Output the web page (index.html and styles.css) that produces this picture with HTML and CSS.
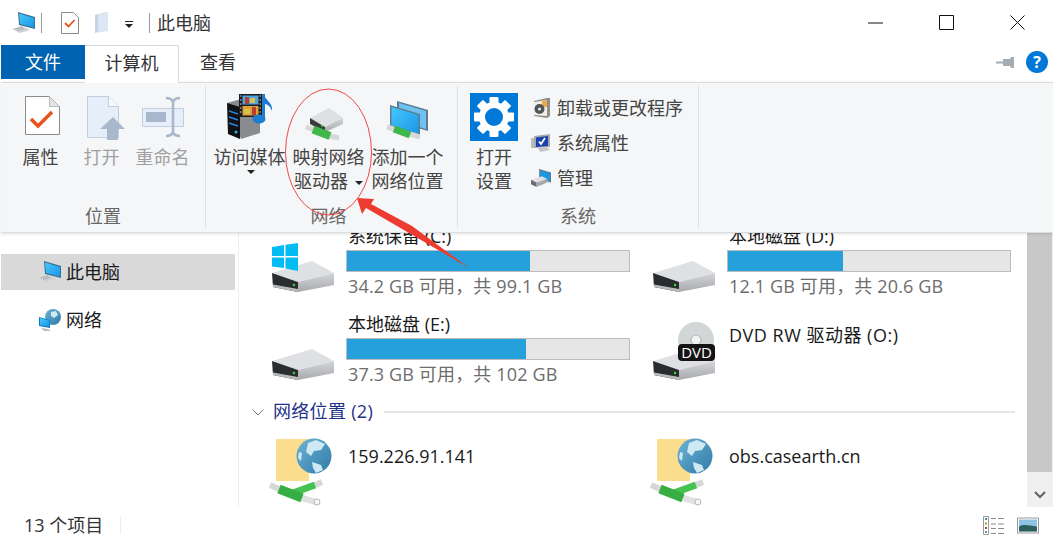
FILE: index.html
```html
<!DOCTYPE html>
<html lang="zh-CN">
<head>
    <meta charset="UTF-8">
    <title>此电脑</title>
    <link rel="stylesheet" href="styles.css">
</head>
<body>
    <svg class="defs" aria-hidden="true">
        <defs>
            <linearGradient id="screen" x1="0" y1="0" x2="1" y2="1">
                <stop offset="0" stop-color="#45c8fb"/>
                <stop offset="1" stop-color="#1a96e6"/>
            </linearGradient>
            <linearGradient id="side" x1="0" y1="0" x2="0" y2="1">
                <stop offset="0" stop-color="#d4d5d8"/>
                <stop offset="1" stop-color="#a9aaad"/>
            </linearGradient>
            <linearGradient id="globe" x1="0" y1="0" x2="1" y2="1">
                <stop offset="0" stop-color="#6db3d4"/>
                <stop offset="1" stop-color="#2f7aa8"/>
            </linearGradient>
            <symbol id="pc" viewBox="0 0 24 22">
                <path d="M6 0l17 5v12L7 13z" fill="#3a6f96"/>
                <path d="M7 1.500l15 4.400v9.500L8 12z" fill="url(#screen)"/>
                <path d="M0 17l10-3 8 4-10 3z" fill="#cfd2d4"/>
                <path d="M3 17l7-2M5 18.500l7-2" stroke="#9a9ea1" stroke-width=".8"/>
            </symbol>
            <symbol id="netpc" viewBox="0 0 24 22">
                <circle cx="15" cy="8" r="8" fill="url(#globe)"/>
                <path d="M13 3l5-1 2 4-4 3-3-2z" fill="#cfe9f4"/>
                <path d="M1 8l11 3v8l-11-2z" fill="#0d7fc4"/>
                <path d="M2 9l9 2.500v6l-9-1.600z" fill="url(#screen)"/>
                <path d="M3 19l7 1 3 2h-7z" fill="#b9bcc0"/>
            </symbol>
            <symbol id="drive" viewBox="0 0 64 58">
                <path d="M0 39L40 27l22 12-36 9z" fill="#dfe0e3"/>
                <path d="M26 48l36-9v12l-36 7z" fill="url(#side)"/>
                <path d="M0 39l26 9v10L1 53z" fill="#2b2c2e"/>
                <path d="M1 50.500L26 55v3L1 53z" fill="#b9babc"/>
                <circle cx="22" cy="51" r="1.200" fill="#35e03c"/>
            </symbol>
            <symbol id="netfolder" viewBox="0 0 64 68">
                <path d="M8 1h33v42H8z" fill="#fbdd8e"/>
                <circle cx="46" cy="18" r="17.500" fill="url(#globe)"/>
                <path d="M40 5l8-3 9 4-4 6-7 1-3 5-5-4zM44 24l9 3 2 5-7 3-3-5zM31 14l3 1-1 8-3-3z" fill="#cfe9f4"/>
                <g fill="none">
                    <path d="M2 47l10 4.500M47 47l7-3" stroke="#d5d8d6" stroke-width="6"/>
                    <path d="M34 60l14 4" stroke="#dfe2e0" stroke-width="6"/>
                    <path d="M22 56l25-9" stroke="#46c253" stroke-width="7"/>
                    <path d="M11 51l23 9" stroke="#37ae44" stroke-width="9"/>
                </g>
                <circle cx="49" cy="64" r="3" fill="#f4f5f4" stroke="#b4b8b5"/>
            </symbol>
        </defs>
    </svg>

    <div class="titlebar">
        <svg class="qa-pc"><use href="#pc"/></svg>
        <span class="qa-sep"></span>
        <svg class="qa-doc" viewBox="0 0 18 22">
            <path d="M.5.500h12l5 5v16H.5z" fill="#fff" stroke="#8b8b8b"/>
            <path d="M4 11l3.500 3.500L13.500 8" fill="none" stroke="#e8541c" stroke-width="1.800"/>
        </svg>
        <svg class="qa-folder" viewBox="0 0 14 21">
            <path d="M0 3l10-3h3v19l-13 2z" fill="#dde7f3"/>
            <path d="M0 3l3-1v17l-3 2z" fill="#c4d3e6"/>
        </svg>
        <span class="qa-drop"></span>
        <span class="qa-sep second"></span>
        <span class="title">此电脑</span>
        <div class="win-buttons">
            <svg class="win-btn" viewBox="0 0 16 16"><path d="M0 8h15" stroke="#111" fill="none"/></svg>
            <svg class="win-btn" viewBox="0 0 16 16"><path d="M.5.500h14v14H.5z" stroke="#111" fill="none"/></svg>
            <svg class="win-btn" viewBox="0 0 16 16"><path d="M.5.500l14 14M14.500.500l-14 14" stroke="#111" fill="none"/></svg>
        </div>
    </div>

    <div class="tabs">
        <div class="tab tab-file">文件</div>
        <div class="tab tab-active">计算机</div>
        <div class="tab tab-plain">查看</div>
        <div class="tab-tools">
            <svg class="pin" viewBox="0 0 18 11">
                <path d="M0 4.500h7v2H0zM7 2h7l1-2h3v11h-3l-1-2H7z" fill="#a5adb2"/>
            </svg>
            <span class="help">?</span>
        </div>
    </div>

    <div class="ribbon">
        <div class="group group-place">
            <div class="group-items">
                <div class="big-btn narrow">
                    <svg class="big-icon" viewBox="0 0 48 48">
                        <path d="M8.500 3.500h24l10 10v28h-34z" fill="#fff" stroke="#8c8c8c"/>
                        <path d="M32.500 3.500v10h10" fill="#e4e4e4" stroke="#bbb"/>
                        <path d="M14 26l7 7 14-14" fill="none" stroke="#e8541c" stroke-width="3.500"/>
                    </svg>
                    <span>属性</span>
                </div>
                <div class="big-btn narrow off">
                    <svg class="big-icon" viewBox="0 0 48 48">
                        <path d="M9.500 3.500h21l10 10v31h-31z" fill="#e6eef9" stroke="#c2cee0"/>
                        <path d="M30.500 3.500v10h10" fill="#f7f9fc" stroke="#c2cee0"/>
                        <path d="M35 24l12 12h-7v11H29V36h-7z" fill="#a9b7cd"/>
                    </svg>
                    <span>打开</span>
                </div>
                <div class="big-btn narrow off">
                    <svg class="big-icon" viewBox="0 0 48 48">
                        <path d="M3.500 15.500h41v18h-41z" fill="#e6eef9" stroke="#c2cee0"/>
                        <path d="M7 19h20v10H7z" fill="#a9b7cd"/>
                        <path d="M27 5c4 0 6 1 7 4 1-3 3-4 7-4M34 9v30M27 43c4 0 6-1 7-4 1 3 3 4 7 4" fill="none" stroke="#a9b7cd" stroke-width="2.500"/>
                    </svg>
                    <span>重命名</span>
                </div>
            </div>
            <div class="group-label">位置</div>
        </div>

        <div class="group group-net">
            <div class="group-items">
                <div class="big-btn wide">
                    <svg class="big-icon" viewBox="0 0 48 48">
                        <path d="M1 10l14-4 19 7v27l-19 6z" fill="#8a8b8e"/>
                        <path d="M1 10l13 4v32L2 41z" fill="#0f1115"/>
                        <path d="M3 18l9 3M3 24l9 3M3 30l9 3" stroke="#2a86d8" stroke-width="1.500"/>
                        <circle cx="10" cy="39" r="1.500" fill="#29b4e8"/>
                        <path d="M13 1h23v23H13z" fill="#1d1d20"/>
                        <path d="M16.500 2.500h16v9h-16z" fill="#4da6df"/>
                        <path d="M16.500 13h16v9.500h-16z" fill="#e0a03c"/>
                        <path d="M19 4h4v7h-4zM26 14h4v8h-4z" fill="#b83c32"/>
                        <path d="M24 5h5v5h-5zM18 16h6v5h-6z" fill="#d8c34a"/>
                        <path d="M14 3h1.500M14 7h1.500M14 11h1.500M14 15h1.500M14 19h1.500M33.500 3H35M33.500 7H35M33.500 11H35M33.500 15H35M33.500 19H35" stroke="#ddd"/>
                        <path d="M37.500 1v25" stroke="#1c7ed2" stroke-width="3"/>
                        <ellipse cx="33" cy="26" rx="6.500" ry="4.500" fill="#1c7ed2"/>
                        <path d="M38 1c1 7 9 8 8 17-2-5-4-7-8-7z" fill="#1c7ed2"/>
                    </svg>
                    <span>访问媒体</span>
                    <i class="caret caret-below"></i>
                </div>
                <div class="big-btn wide">
                    <svg class="big-icon" viewBox="0 0 48 48">
                        <path d="M5 25l19-10 14 10-18 9z" fill="#dfe0e3"/>
                        <path d="M20 34l18-9v6l-18 8z" fill="url(#side)"/>
                        <path d="M5 25l15 9v5L5 31z" fill="#3a3b3d"/>
                        <circle cx="17" cy="33" r="1" fill="#35e03c"/>
                        <g fill="none">
                            <path d="M1 34l7 2.500M24 43l10 2" stroke="#d5d8d6" stroke-width="5"/>
                            <path d="M8 36.500l17 6.500" stroke="#3fb84b" stroke-width="8"/>
                        </g>
                    </svg>
                    <span>映射网络</span>
                    <span>驱动器<i class="caret caret-inline"></i></span>
                </div>
                <div class="big-btn wide">
                    <svg class="big-icon" viewBox="0 0 48 48">
                        <path d="M13 8l31 9v21l-31-9z" fill="#5d7c93"/>
                        <path d="M15 10l27 8v18l-27-8z" fill="#6fc2ef"/>
                        <path d="M6 12l30 9v22L6 33z" fill="#5d7c93"/>
                        <path d="M7.500 14l27 8v19l-27-9z" fill="url(#screen)"/>
                        <g fill="none">
                            <path d="M3 34l7 2M26 41l10 3" stroke="#d5d8d6" stroke-width="5"/>
                            <path d="M10 36l16 6" stroke="#3fb84b" stroke-width="7"/>
                        </g>
                    </svg>
                    <span>添加一个</span>
                    <span>网络位置</span>
                </div>
            </div>
            <div class="group-label shift">网络</div>
        </div>

        <div class="group group-sys">
            <div class="group-items">
                <div class="big-btn settings">
                    <svg class="big-icon gear" viewBox="0 0 48 48">
                        <rect width="48" height="48" fill="#0078d7"/>
                        <g fill="#fff">
                            <rect x="19.500" y="4" width="9" height="40" rx="1"/>
                            <rect x="19.500" y="4" width="9" height="40" rx="1" transform="rotate(45 24 24)"/>
                            <rect x="19.500" y="4" width="9" height="40" rx="1" transform="rotate(90 24 24)"/>
                            <rect x="19.500" y="4" width="9" height="40" rx="1" transform="rotate(135 24 24)"/>
                            <circle cx="24" cy="24" r="15"/>
                        </g>
                        <circle cx="24" cy="24" r="9" fill="#0078d7"/>
                    </svg>
                    <span>打开</span>
                    <span>设置</span>
                </div>
                <div class="small-list">
                    <div class="small-btn">
                        <svg class="small-icon" viewBox="0 0 20 20">
                            <path d="M3 3l13-3h3v18l-3 2-13-2z" fill="#8f8e8a"/>
                            <path d="M3 4l13-2v16L3 17z" fill="#f2efe6"/>
                            <path d="M11 2.500h5V9h-5z" fill="#eda945"/>
                            <circle cx="8.500" cy="11" r="5" fill="#4f5457"/>
                            <circle cx="8.500" cy="11" r="1.600" fill="#e6e8e8"/>
                        </svg>
                        <span>卸载或更改程序</span>
                    </div>
                    <div class="small-btn">
                        <svg class="small-icon" viewBox="0 0 20 20">
                            <path d="M0 5h4v10H0z" fill="#b9bcbf"/>
                            <path d="M3 3l16-2v13L3 15z" fill="#a7abb0"/>
                            <path d="M5 4.500l12-1.500v10L5 14z" fill="#1c3fae"/>
                            <path d="M8 8.500l2 2.500 4-6" fill="none" stroke="#fff" stroke-width="1.800"/>
                            <path d="M7 15l9-1 3 3-10 2z" fill="#c3c6c9"/>
                        </svg>
                        <span>系统属性</span>
                    </div>
                    <div class="small-btn">
                        <svg class="small-icon" viewBox="0 0 22 20">
                            <path d="M9 0l13 4v11L9 11z" fill="#5f7a8f"/>
                            <path d="M10 1.500l11 3.400v9L10 10.500z" fill="#1a96e0"/>
                            <path d="M0 12l12-4 6 3-12 4z" fill="#dfe0e3"/>
                            <path d="M6 15l12-4v4L6 20z" fill="#a7a9ac"/>
                            <path d="M0 12l6 3v5l-6-3z" fill="#6a6c6f"/>
                        </svg>
                        <span>管理</span>
                    </div>
                </div>
            </div>
            <div class="group-label">系统</div>
        </div>
    </div>

    <div class="body">
        <nav class="sidebar">
            <div class="nav-row selected">
                <svg class="nav-icon"><use href="#pc"/></svg>
                <span>此电脑</span>
            </div>
            <div class="nav-row">
                <svg class="nav-icon"><use href="#netpc"/></svg>
                <span>网络</span>
            </div>
        </nav>

        <main class="content">
            <div class="tile-grid">
                <div class="tile">
                    <svg class="drive-icon" viewBox="0 0 64 58">
                        <use href="#drive"/>
                        <path fill="#00bcf2" d="M0 13l12-2v11H0zM13.500 10.800L26 9v13H13.500zM0 23.500h12V34L0 32.500zM13.500 23.500H26V37l-12.500-2.500z"/>
                    </svg>
                    <div class="tile-info">
                        <div class="name">系统保留 (C:)</div>
                        <div class="bar"><div class="fill" style="width: 64.800%"></div></div>
                        <div class="usage">34.2 GB 可用，共 99.1 GB</div>
                    </div>
                </div>
                <div class="tile">
                    <svg class="drive-icon"><use href="#drive"/></svg>
                    <div class="tile-info">
                        <div class="name">本地磁盘 (D:)</div>
                        <div class="bar"><div class="fill" style="width: 40.800%"></div></div>
                        <div class="usage">12.1 GB 可用，共 20.6 GB</div>
                    </div>
                </div>
                <div class="tile">
                    <svg class="drive-icon"><use href="#drive"/></svg>
                    <div class="tile-info">
                        <div class="name">本地磁盘 (E:)</div>
                        <div class="bar"><div class="fill" style="width: 63.400%"></div></div>
                        <div class="usage">37.3 GB 可用，共 102 GB</div>
                    </div>
                </div>
                <div class="tile">
                    <svg class="drive-icon" viewBox="0 0 64 58">
                        <use href="#drive"/>
                        <circle cx="43" cy="18" r="18" fill="#d3d6d6"/>
                        <circle cx="43" cy="18" r="5" fill="#f1f2f2" stroke="#b0b3b3"/>
                        <rect x="25" y="22" width="37" height="17" rx="4" fill="#141414"/>
                        <text class="dvd" x="43.500" y="36">DVD</text>
                    </svg>
                    <div class="tile-info">
                        <div class="name dvd-name">DVD RW 驱动器 (O:)</div>
                    </div>
                </div>
            </div>

            <div class="group-head">
                <svg class="chevron" viewBox="0 0 12 7"><path d="M.5.500L6 6 11.500.500" fill="none" stroke="#777"/></svg>
                <span class="head-text">网络位置 (2)</span>
                <span class="head-line"></span>
            </div>

            <div class="tile-grid net-grid">
                <div class="tile">
                    <svg class="net-icon"><use href="#netfolder"/></svg>
                    <div class="net-name">159.226.91.141</div>
                </div>
                <div class="tile">
                    <svg class="net-icon"><use href="#netfolder"/></svg>
                    <div class="net-name">obs.casearth.cn</div>
                </div>
            </div>
        </main>

        <div class="scrollbar">
            <div class="thumb"></div>
            <div class="scroll-down">
                <svg class="scroll-chev" viewBox="0 0 12 8"><path d="M1 1l5 5 5-5" fill="none" stroke="#606060" stroke-width="2"/></svg>
            </div>
        </div>
    </div>

    <div class="statusbar">
        <span class="count">13 个项目</span>
        <span class="status-sep"></span>
        <div class="views">
            <svg class="view-icon" viewBox="0 0 22 19">
                <path d="M.5.500h5v18h-5z" fill="#fff" stroke="#999"/>
                <path d="M2 2h2v2H2z" fill="#4a88b8"/>
                <path d="M2 6.500h2v2H2z" fill="#a6a83a"/>
                <path d="M2 11h2v2H2z" fill="#c2452f"/>
                <path d="M2 15h2v2H2z" fill="#7b8da8"/>
                <path d="M8 2.500h5M15 2.500h6M8 8h5M15 8h6M8 12.500h5M15 12.500h6M8 17.500h5M15 17.500h6" stroke="#8a8a8a"/>
            </svg>
            <svg class="view-icon" viewBox="0 0 22 16">
                <rect x=".5" y=".5" width="21" height="15" fill="#fff" stroke="#999"/>
                <rect x="2" y="2" width="18" height="12" fill="#8fc3e6"/>
                <path d="M2 9c5-3 10-1 18 0v5H2z" fill="#2f5f5a"/>
            </svg>
        </div>
    </div>

    <svg class="markup" viewBox="0 0 1053 543" aria-hidden="true">
        <ellipse cx="328.500" cy="152" rx="43" ry="63" fill="none" stroke="#ee4a4a"/>
        <path d="M357 198l17 1-3 5 41 22 57 42-72-42-31-18-4 6z" fill="#ee3b30"/>
    </svg>
</body>
</html>
```

FILE: styles.css
```css
* {
	box-sizing: border-box;
}

body {
	margin: 0;
	width: 1053px;
	height: 543px;
	overflow: hidden;
	position: relative;
	display: flex;
	flex-direction: column;
	background-color: #fff;
	color: #1a1a1a;
	font-family: "Open Sans", "Noto Sans CJK SC", sans-serif;
	font-size: 18px;
	line-height: 24px;
}

svg {
	display: block;
	flex: none;
}

.defs {
	position: absolute;
	width: 0;
	height: 0;
}

/* title bar */
.titlebar {
	height: 45px;
	display: flex;
	align-items: center;
	padding-left: 12px;
	flex: none;
}

.qa-pc {
	width: 24px;
	height: 22px;
}

.qa-sep {
	width: 1px;
	height: 20px;
	background-color: #9a9a9a;
	margin-left: 5px;
}

.qa-sep.second {
	margin-left: 16px;
}

.qa-doc {
	width: 18px;
	height: 22px;
	margin-left: 19px;
}

.qa-folder {
	width: 14px;
	height: 21px;
	margin-left: 16px;
}

.qa-drop {
	width: 8px;
	height: 7px;
	margin-left: 16px;
	margin-top: 3px;
	border-top: 1px solid #222;
	position: relative;
}

.qa-drop::after {
	content: "";
	position: absolute;
	left: 0;
	top: 2px;
	border: 4px solid transparent;
	border-top-color: #222;
	border-bottom: 0;
}

.title {
	margin-left: 7px;
	color: #333;
}

.win-buttons {
	margin-left: auto;
	margin-right: 27px;
	display: flex;
	gap: 55px;
}

.win-btn {
	width: 16px;
	height: 16px;
}

/* tabs */
.tabs {
	height: 38px;
	display: flex;
	padding-left: 1px;
	flex: none;
	position: relative;
	z-index: 3;
	margin-bottom: -1px;
}

.tab {
	text-align: center;
	padding-top: 5px;
}

.tab-file {
	width: 84px;
	height: 34px;
	background-color: #0063b1;
	color: #fff;
}

.tab-active {
	width: 94px;
	background-color: #fff;
	border: 1px solid #dadbdc;
	border-bottom: 0;
	border-left: 0;
	color: #333;
}

.tab-plain {
	width: 78px;
	color: #333;
}

.tab-tools {
	margin-left: auto;
	margin-right: 5px;
	display: flex;
	align-items: center;
	gap: 12px;
	height: 30px;
	margin-top: 2px;
}

.pin {
	width: 18px;
	height: 11px;
}

.help {
	width: 22px;
	height: 22px;
	border-radius: 50%;
	background-color: #0078d7;
	color: #fff;
	font-size: 16px;
	font-weight: 700;
	line-height: 22px;
	text-align: center;
}

/* ribbon */
.ribbon {
	height: 151px;
	margin-left: 1px;
	display: flex;
	flex: none;
	background-color: #f5f6f7;
	border-top: 1px solid #dadbdc;
	border-bottom: 1px solid #dcdddf;
	box-shadow: 0 1px 3px rgba(0, 0, 0, 0.12);
	position: relative;
	z-index: 2;
	padding-top: 3px;
	color: #444;
}

.group {
	height: 142px;
	display: flex;
	flex-direction: column;
	border-right: 1px solid #dfe0e2;
}

.group-place {
	width: 205px;
}

.group-net {
	width: 252px;
}

.group-sys {
	width: 241px;
}

.group-items {
	flex: 1;
	display: flex;
	padding-top: 7px;
}

.group-place .group-items {
	padding-left: 9px;
}

.group-net .group-items {
	padding-left: 4px;
}

.group-sys .group-items {
	padding-left: 12px;
}

.group-label {
	text-align: center;
	color: #666;
}

.group-label.shift {
	padding-right: 6px;
}

.big-btn {
	position: relative;
	display: flex;
	flex-direction: column;
	align-items: center;
	white-space: nowrap;
}

.big-btn.narrow {
	width: 61px;
}

.big-btn.wide {
	width: 79px;
}

.big-btn.settings {
	width: 48px;
}

.big-btn.off {
	color: #a0a0a0;
}

.big-icon {
	width: 48px;
	height: 48px;
	margin-bottom: 4px;
}

.caret {
	display: inline-block;
	border: 4px solid transparent;
	border-top-color: #222;
	border-bottom: 0;
}

.caret-below {
	margin: 1px 0 0 3px;
}

.caret-inline {
	margin-left: 7px;
	vertical-align: middle;
}

.small-list {
	margin-left: 13px;
	display: flex;
	flex-direction: column;
	gap: 5px;
}

.small-btn {
	height: 30px;
	display: flex;
	align-items: center;
	gap: 6px;
	white-space: nowrap;
}

.small-icon {
	width: 20px;
	height: 20px;
}

/* main area */
.body {
	flex: 1;
	min-height: 0;
	display: flex;
}

.sidebar {
	width: 239px;
	flex: none;
	border-right: 1px solid #eee;
	padding-top: 21px;
	display: flex;
	flex-direction: column;
	gap: 12px;
}

.nav-row {
	width: 234px;
	height: 36px;
	margin-left: 1px;
	padding-left: 37px;
	display: flex;
	align-items: center;
	gap: 4px;
}

.nav-row.selected {
	background-color: #d9d9d9;
}

.nav-icon {
	width: 24px;
	height: 22px;
}

.content {
	flex: 1;
	min-width: 0;
	overflow: hidden;
}

.tile-grid {
	display: grid;
	grid-template-columns: 381px 381px;
	row-gap: 14px;
	padding-left: 33px;
	margin-top: -9px;
}

.tile {
	display: flex;
	gap: 10px;
}

.drive-icon {
	width: 64px;
	height: 58px;
	margin-top: 10px;
}

.tile-info {
	width: 284px;
}

.name {
	padding-left: 2px;
}

.dvd-name {
	margin-top: 11px;
	letter-spacing: 0.5px;
}

.bar {
	height: 22px;
	margin-top: 2px;
	border: 1px solid #bcbcbc;
	background-color: #e6e6e6;
}

.fill {
	height: 100%;
	background-color: #26a0da;
}

.usage {
	margin-top: 2px;
	padding-left: 2px;
	color: #6d6d6d;
	letter-spacing: 0.15px;
	white-space: nowrap;
}

.dvd {
	fill: #fff;
	font-size: 15px;
	text-anchor: middle;
}

.group-head {
	height: 24px;
	margin: 14px 12px 0 13px;
	display: flex;
	align-items: center;
	color: #1e3287;
}

.chevron {
	width: 12px;
	height: 7px;
}

.head-text {
	margin-left: 9px;
	padding-bottom: 2px;
	letter-spacing: 0.3px;
}

.head-line {
	flex: 1;
	height: 2px;
	margin-left: 11px;
	background-color: #e6e6e6;
}

.net-grid {
	margin-top: 14px;
	padding-left: 29px;
}

.net-icon {
	width: 64px;
	height: 68px;
}

.net-name {
	margin: 6px 0 0 6px;
}

.scrollbar {
	width: 26px;
	flex: none;
	display: flex;
	flex-direction: column;
	background-color: #f0f0f0;
	height: 274px;
}

.thumb {
	flex: 1;
	background-color: #c8c8c8;
	margin-right: 1px;
}

.scroll-down {
	height: 35px;
	display: flex;
	align-items: center;
	justify-content: center;
}

.scroll-chev {
	width: 12px;
	height: 8px;
	margin-top: 10px;
}

/* status bar */
.statusbar {
	height: 36px;
	flex: none;
	display: flex;
	align-items: center;
	padding-left: 24px;
	color: #333;
}

.status-sep {
	width: 1px;
	height: 18px;
	margin-left: 17px;
	background-color: #eee;
}

.views {
	margin-left: auto;
	margin-right: 14px;
	display: flex;
	align-items: center;
	gap: 12px;
}

.view-icon {
	width: 22px;
	height: 19px;
}

/* red hand-drawn annotation lying over the window */
.markup {
	position: absolute;
	left: 0;
	top: 0;
	width: 1053px;
	height: 543px;
	pointer-events: none;
	z-index: 5;
}
```
